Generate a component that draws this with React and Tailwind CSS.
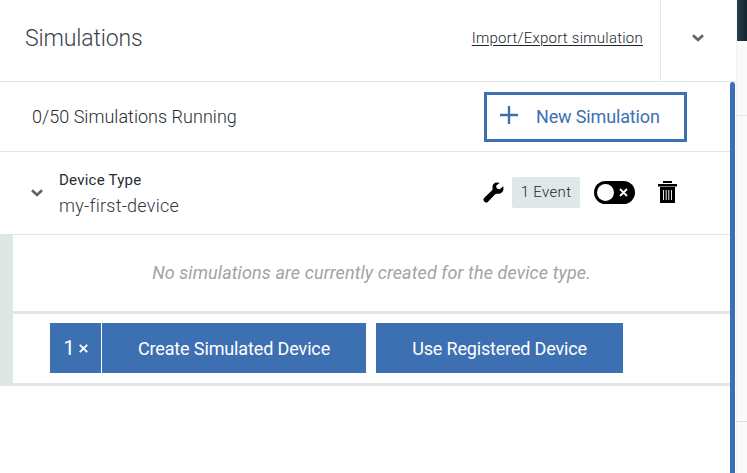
function Chevron() {
  return (
    <svg width="12" height="8" viewBox="0 0 12 8" fill="none" stroke="#5f6666" strokeWidth="2.7">
      <path d="M1 1.2 L6 6 L11 1.2" />
    </svg>
  );
}

function Header() {
  return (
    <header className="flex h-[82px] items-stretch border-b border-[#dfe6e6]">
      <h1 className="flex-1 pl-[25px] pt-[23px] text-[23px] leading-8 font-light tracking-[-0.15px] text-[#3c434b]">
        Simulations
      </h1>
      <a className="pr-[17px] pt-[26px] text-[15px] leading-6 font-light tracking-[0.24px] text-[#1f262e] underline underline-offset-2">
        Import/Export simulation
      </a>
      <button className="flex w-[76px] items-center justify-center border-l border-[#dfe6e6] pr-[2px] pb-[6px]">
        <Chevron />
      </button>
    </header>
  );
}

function Summary() {
  return (
    <section className="flex h-[70px] items-center justify-between border-b border-[#dfe6e6] pl-8 pr-[43px]">
      <p className="text-[18px] font-light tracking-[0.03px] text-[#262d36]">0/50 Simulations Running</p>
      <button className="flex h-[50px] w-[203px] items-center border-3 border-[#3d70b2] pl-[13px] text-[18px] text-[#3d70b2]">
        <svg className="mr-[18px] -mt-1" width="18" height="18" viewBox="0 0 18 18" stroke="#3d70b2" strokeWidth="2.4">
          <path d="M9 0V18M0 9H18" />
        </svg>
        <span className="tracking-[-0.15px]">New Simulation</span>
      </button>
    </section>
  );
}

function DeviceType() {
  return (
    <section className="flex h-[83px] items-center border-b border-[#dfe6e6] pl-[31px]">
      <Chevron />
      <div className="ml-4 flex-1 pt-[2px]">
        <p className="text-[15px] leading-6 tracking-[0.25px] text-[#252b33]">Device Type</p>
        <p className="text-[18px] leading-7 font-light tracking-[0.25px] text-[#30373f]">my-first-device</p>
      </div>
      <div className="flex items-center pb-[2px]">
        <svg className="mr-2" width="21" height="21" viewBox="0 0 21 21">
          <path
            d="M14.8 0.6C11.2 0.2 8.8 3 9.6 6.3Q9.8 7.5 8.8 8.5L1.1 15.9C-0.9 18 1.9 22 4.8 20L12.2 12.3Q13 11.5 14.2 11.7C18 12.2 20.8 9.6 20.4 6.4V4.2L16.7 7.3L13.8 6.6L13.1 3.7L16.5 0.9Z"
            fill="#000"
          />
        </svg>
        <span className="flex h-[31px] w-[68px] items-center justify-center rounded-[2px] bg-[#dfe8e8] text-[15px] font-light tracking-[0.35px] text-[#1f262e]">
          1 Event
        </span>
        <button className="ml-[14px] flex h-[23px] w-[41px] items-center justify-between rounded-full bg-black pl-[3px] pr-[7px]">
          <span className="size-[17px] rounded-full bg-white" />
          <svg width="9" height="9" viewBox="0 0 9 9" stroke="#fff" strokeWidth="1.8">
            <path d="M1 1L8 8M8 1L1 8" />
          </svg>
        </button>
        <svg className="ml-[23px] mr-[53px]" width="19" height="22" viewBox="0 0 19 22">
          <path d="M5 0H14V2H5ZM0 3H19V5.5H0ZM2 6H17V22H2Z" fill="#000" />
          <path d="M5.5 9V19M8.2 9V19M10.8 9V19M13.5 9V19" stroke="#fff" strokeWidth="0.9" />
        </svg>
      </div>
    </section>
  );
}

function Simulations() {
  return (
    <section className="border-l-[13px] border-[#dfe6e6]">
      <div className="flex h-[79px] items-center justify-center border-b-3 border-[#dfe6e6]">
        <p className="pb-px text-[18px] italic tracking-[0.1px] text-[#a3a3a3]">
          No simulations are currently created for the device type.
        </p>
      </div>
      <div className="flex h-[72px] border-b-3 border-[#dfe6e6] pl-[37px] pt-[9px] text-[18px] text-white">
        <button className="mr-px flex h-[50px] w-[51px] items-center justify-center gap-1 bg-[#3d70b2]">
          <span className="pb-px text-[20px]">1</span>
          <svg width="9" height="9" viewBox="0 0 9 9" stroke="#fff" strokeWidth="1.8">
            <path d="M0.8 0.8L8.2 8.2M8.2 0.8L0.8 8.2" />
          </svg>
        </button>
        <button className="h-[50px] w-[264px] bg-[#3d70b2] tracking-[-0.13px]">Create Simulated Device</button>
        <button className="ml-[10px] h-[50px] w-[247px] bg-[#3d70b2] tracking-[-0.17px]">Use Registered Device</button>
      </div>
    </section>
  );
}

export default function App() {
  return (
    <div className="flex h-[473px] w-[747px] overflow-hidden bg-white font-['Roboto',sans-serif]">
      <main className="w-[736px] shrink-0">
        <Header />
        <div className="flex h-[391px]">
          <div className="w-[730px]">
            <Summary />
            <DeviceType />
            <Simulations />
          </div>
          <div className="w-[5px] rounded-t-[3px] bg-[#3d70b2]" />
        </div>
      </main>
      <aside className="flex flex-1 flex-col bg-[#fafafb]">
        <div className="ml-px h-[41px] bg-linear-to-r from-[#263f4b] to-[#14252e]" />
        <div className="h-[75px] border-b border-l border-[#e3e6e6] border-l-[#f0f1f1]" />
        <div className="h-[306px] border-b border-l border-[#dcdcde] border-l-[#f0f1f1]" />
        <div className="flex-1 border-l border-[#f0f1f1]" />
      </aside>
    </div>
  );
}
